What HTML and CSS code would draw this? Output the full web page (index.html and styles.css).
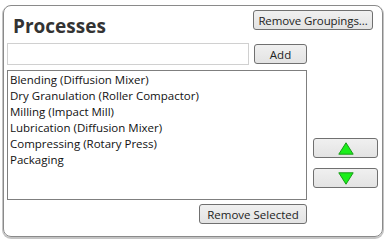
FILE: index.html
```html
<!DOCTYPE html>
<html>
<head>
<meta charset="utf-8">
<link rel="stylesheet" href="styles.css">
</head>
<body>
<div class="panel">
  <div class="header">
    <h1 class="title">Processes</h1>
    <button class="btn btn-groupings">Remove Groupings...</button>
  </div>
  <div class="main">
    <div class="left">
      <div class="add-row">
        <input class="name-input" type="text">
        <button class="btn btn-add">Add</button>
      </div>
      <ul class="list">
        <li>Blending (Diffusion Mixer)</li>
        <li>Dry Granulation (Roller Compactor)</li>
        <li>Milling (Impact Mill)</li>
        <li>Lubrication (Diffusion Mixer)</li>
        <li>Compressing (Rotary Press)</li>
        <li>Packaging</li>
      </ul>
      <div class="bottom-row">
        <button class="btn btn-remove">Remove Selected</button>
      </div>
    </div>
    <div class="side">
      <button class="btn btn-move"><svg width="16" height="13" viewBox="0 0 16 13"><polygon points="8,0.8 15.2,12.2 0.8,12.2" fill="#1bef1b" stroke="#1a9a1a" stroke-width="1"/></svg></button>
      <button class="btn btn-move"><svg width="16" height="13" viewBox="0 0 16 13"><polygon points="0.8,0.8 15.2,0.8 8,12.2" fill="#1bef1b" stroke="#1a9a1a" stroke-width="1"/></svg></button>
    </div>
  </div>
</div>
</body>
</html>
```

FILE: styles.css
```css
html, body {
  margin: 0;
  padding: 0;
  background: #ffffff;
}
body {
  font-family: "Open Sans", "Liberation Sans", sans-serif;
  width: 389px;
  height: 242px;
  overflow: hidden;
}
.panel {
  box-sizing: border-box;
  margin: 5px 0 0 3px;
  width: 380px;
  height: 232px;
  border: 1px solid #8a8a8a;
  border-radius: 8px;
  box-shadow: 0 1px 0 1px #c4c4c4;
  padding: 4px 3px 0 3px;
}
.header {
  display: flex;
  justify-content: space-between;
  align-items: flex-start;
  height: 33px;
}
.title {
  margin: 5px 0 0 6px;
  font-size: 19px;
  line-height: 22px;
  font-weight: 700;
  color: #333333;
}
.btn {
  box-sizing: border-box;
  height: 20px;
  margin: 0;
  padding: 0;
  border: 1px solid #707070;
  border-radius: 3px;
  background: linear-gradient(#f0f0f0, #e3e3e3);
  font-family: "Open Sans", "Liberation Sans", sans-serif;
  font-size: 11.5px;
  line-height: 17px;
  color: #222222;
  white-space: nowrap;
}
.btn-groupings {
  width: 120px;
  margin-right: 6px;
  letter-spacing: -0.1px;
}
.main {
  display: flex;
  gap: 6px;
}
.left {
  width: 300px;
  flex-shrink: 0;
  display: flex;
  flex-direction: column;
}
.add-row {
  display: flex;
  align-items: flex-start;
  justify-content: space-between;
  height: 27px;
}
.name-input {
  box-sizing: border-box;
  width: 242px;
  height: 22px;
  margin: 0;
  border: 1px solid #d0d0d0;
  padding: 0 3px;
}
.btn-add {
  width: 53px;
  margin-top: 1px;
}
.list {
  box-sizing: border-box;
  height: 130px;
  margin: 0;
  padding: 1px 2px;
  list-style: none;
  border: 1px solid #7f7f7f;
  font-size: 11.5px;
  line-height: 16px;
  color: #111111;
}
.bottom-row {
  display: flex;
  justify-content: flex-end;
  padding-top: 4px;
}
.btn-remove {
  width: 108px;
}
.side {
  width: 65px;
  flex-shrink: 0;
  display: flex;
  flex-direction: column;
  gap: 10px;
  padding-top: 95px;
}
.btn-move {
  width: 65px;
  display: flex;
  align-items: center;
  justify-content: center;
}
.btn-move svg {
  display: block;
}
```
